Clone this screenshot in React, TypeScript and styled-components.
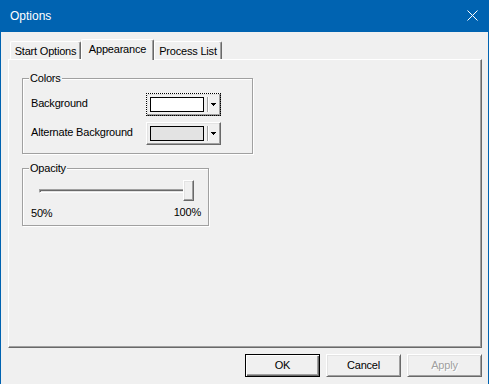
import React from "react";
import styled, { createGlobalStyle } from "styled-components";

const GlobalStyle = createGlobalStyle`
  html, body {
    margin: 0;
    padding: 0;
    background: #f0f0f0;
  }
  body {
    font-family: "Liberation Sans", Arial, sans-serif;
    font-size: 11px;
    color: #000;
  }
`;

const Window = styled.div`
  width: 489px;
  height: 384px;
  box-sizing: border-box;
  background: #0063b1;
  padding: 0 1px 1px;
  display: flex;
  flex-direction: column;
`;

const TitleBar = styled.div`
  height: 31px;
  flex: none;
  display: flex;
  align-items: center;
  justify-content: space-between;
  padding: 0 10px 1px 9px;
  color: #fff;
  font-size: 12px;
`;

const Body = styled.div`
  flex: 1;
  background: #f0f0f0;
  padding: 7px 6px 7px 7px;
  display: flex;
  flex-direction: column;
`;

const TabStrip = styled.div`
  display: flex;
  align-items: flex-end;
  height: 20px;
  padding-left: 2px;
  position: relative;
  z-index: 1;
`;

const Tab = styled.div<{ $active?: boolean; $w: number }>`
  box-sizing: border-box;
  width: ${(p) => p.$w}px;
  height: ${(p) => (p.$active ? 21 : 18)}px;
  margin-bottom: ${(p) => (p.$active ? -1 : 0)}px;
  background: #f0f0f0;
  border-top: 1px solid #fff;
  border-left: 1px solid #fff;
  border-right: 1px solid #696969;
  border-radius: 2px 2px 0 0;
  box-shadow: inset -1px 0 0 #a0a0a0;
  display: flex;
  align-items: center;
  justify-content: center;
  padding-bottom: ${(p) => (p.$active ? 3 : 0)}px;
  letter-spacing: -0.2px;
  white-space: nowrap;
`;

const Panel = styled.div`
  box-sizing: border-box;
  height: 289px;
  border-top: 1px solid #fff;
  border-left: 1px solid #fff;
  border-right: 1px solid #696969;
  border-bottom: 1px solid #696969;
  box-shadow: inset -1px -1px 0 #a0a0a0;
  padding: 18px 0 0 13px;
  display: flex;
  flex-direction: column;
  align-items: flex-start;
  gap: 14px;
`;

const GroupBox = styled.div<{ $w: number }>`
  box-sizing: border-box;
  width: ${(p) => p.$w}px;
  border: 1px solid #a0a0a0;
  box-shadow: 1px 1px 0 #fff, inset 1px 1px 0 #fff;
  display: flex;
  flex-direction: column;
  align-items: flex-start;
`;

const GroupTitle = styled.div`
  margin: -7px 0 0 6px;
  padding: 0 1px;
  line-height: 13px;
  background: #f0f0f0;
  letter-spacing: -0.2px;
`;

const ColorGrid = styled.div`
  display: grid;
  grid-template-columns: 115px 75px;
  grid-auto-rows: 23px;
  row-gap: 6px;
  align-items: center;
  margin: 8px 0 8px 8px;
`;

const Label = styled.span`
  letter-spacing: -0.2px;
  white-space: nowrap;
  margin-top: -3px;
`;

const ComboButton = styled.div<{ $focus?: boolean }>`
  box-sizing: border-box;
  width: 75px;
  height: 23px;
  background: #f0f0f0;
  border-top: 1px solid #fff;
  border-left: 1px solid #fff;
  border-right: 1px solid #696969;
  border-bottom: 1px solid #696969;
  box-shadow: inset -1px -1px 0 #a0a0a0, inset 1px 1px 0 #e3e3e3;
  display: flex;
  align-items: center;
  padding-left: 3px;
  outline: ${(p) => (p.$focus ? "1px dotted #000" : "none")};
  outline-offset: -1px;
`;

const Swatch = styled.div<{ $color: string }>`
  box-sizing: border-box;
  width: 54px;
  height: 15px;
  border: 1px solid #000;
  background: ${(p) => p.$color};
`;

const Divider = styled.div`
  width: 1px;
  height: 15px;
  margin-left: 3px;
  background: #a0a0a0;
  box-shadow: 1px 0 0 #fff;
`;

const ArrowCell = styled.div`
  flex: 1;
  display: flex;
  align-items: center;
  justify-content: center;
  padding-right: 2px;
`;

const SliderRow = styled.div`
  display: flex;
  align-items: center;
  margin: 5px 0 0 16px;
  height: 21px;
`;

const Track = styled.div`
  box-sizing: border-box;
  width: 146px;
  height: 4px;
  border-top: 1px solid #a0a0a0;
  border-left: 1px solid #a0a0a0;
  border-bottom: 1px solid #fff;
  border-right: 1px solid #fff;
  background: #e3e3e3;
  box-shadow: inset 1px 1px 0 #696969;
`;

const Thumb = styled.div`
  box-sizing: border-box;
  width: 11px;
  height: 21px;
  margin-left: -2px;
  background: #f0f0f0;
  border-top: 1px solid #fff;
  border-left: 1px solid #fff;
  border-right: 1px solid #696969;
  border-bottom: 1px solid #696969;
  box-shadow: inset -1px -1px 0 #a0a0a0, inset 1px 1px 0 #e3e3e3;
`;

const ScaleRow = styled.div`
  align-self: stretch;
  display: flex;
  justify-content: space-between;
  align-items: flex-start;
  margin: 6px 7px 5px 8px;
  line-height: 13px;
`;

const ScaleLabel = styled.span<{ $raise?: boolean }>`
  letter-spacing: -0.2px;
  margin-top: ${(p) => (p.$raise ? -1 : 0)}px;
`;

const Footer = styled.div`
  display: flex;
  justify-content: flex-end;
  gap: 6px;
  margin-top: 6px;
`;

const Button = styled.div<{ $default?: boolean; $disabled?: boolean }>`
  box-sizing: border-box;
  width: 75px;
  height: 23px;
  background: #f0f0f0;
  border: 1px solid;
  border-color: ${(p) => (p.$default ? "#000" : "#fff #696969 #696969 #fff")};
  box-shadow: ${(p) =>
    p.$default
      ? "inset 1px 1px 0 #fff, inset -1px -1px 0 #696969, inset -2px -2px 0 #a0a0a0"
      : "inset 1px 1px 0 #e3e3e3, inset -1px -1px 0 #a0a0a0"};
  display: flex;
  align-items: center;
  justify-content: center;
  color: ${(p) => (p.$disabled ? "#a0a0a0" : "#000")};
  text-shadow: ${(p) => (p.$disabled ? "1px 1px 0 #fff" : "none")};
  letter-spacing: -0.2px;
  padding-bottom: 1px;
`;

const DownArrow = () => (
  <svg width="5" height="3" viewBox="0 0 5 3" shapeRendering="crispEdges">
    <path d="M0 0h5v1h-1v1h-1v1h-1v-1h-1v-1h-1z" fill="#000" />
  </svg>
);

const CloseIcon = () => (
  <svg width="11" height="11" viewBox="0 0 11 11">
    <path d="M0.5 0.5L10.5 10.5M10.5 0.5L0.5 10.5" stroke="#fff" strokeWidth="1" />
  </svg>
);

const colorRows = [
  { label: "Background", color: "#ffffff", focus: true },
  { label: "Alternate Background", color: "#e3e3e3", focus: false },
];

export default function App() {
  return (
    <Window>
      <GlobalStyle />
      <TitleBar>
        <span>Options</span>
        <CloseIcon />
      </TitleBar>
      <Body>
        <TabStrip>
          <Tab $w={71}>Start Options</Tab>
          <Tab $w={73} $active>
            Appearance
          </Tab>
          <Tab $w={68}>Process List</Tab>
        </TabStrip>
        <Panel>
          <GroupBox $w={231}>
            <GroupTitle>Colors</GroupTitle>
            <ColorGrid>
              {colorRows.map((r) => (
                <React.Fragment key={r.label}>
                  <Label>{r.label}</Label>
                  <ComboButton $focus={r.focus}>
                    <Swatch $color={r.color} />
                    <Divider />
                    <ArrowCell>
                      <DownArrow />
                    </ArrowCell>
                  </ComboButton>
                </React.Fragment>
              ))}
            </ColorGrid>
          </GroupBox>
          <GroupBox $w={187}>
            <GroupTitle>Opacity</GroupTitle>
            <SliderRow>
              <Track />
              <Thumb />
            </SliderRow>
            <ScaleRow>
              <ScaleLabel>50%</ScaleLabel>
              <ScaleLabel $raise>100%</ScaleLabel>
            </ScaleRow>
          </GroupBox>
        </Panel>
        <Footer>
          <Button $default>OK</Button>
          <Button>Cancel</Button>
          <Button $disabled>Apply</Button>
        </Footer>
      </Body>
    </Window>
  );
}
